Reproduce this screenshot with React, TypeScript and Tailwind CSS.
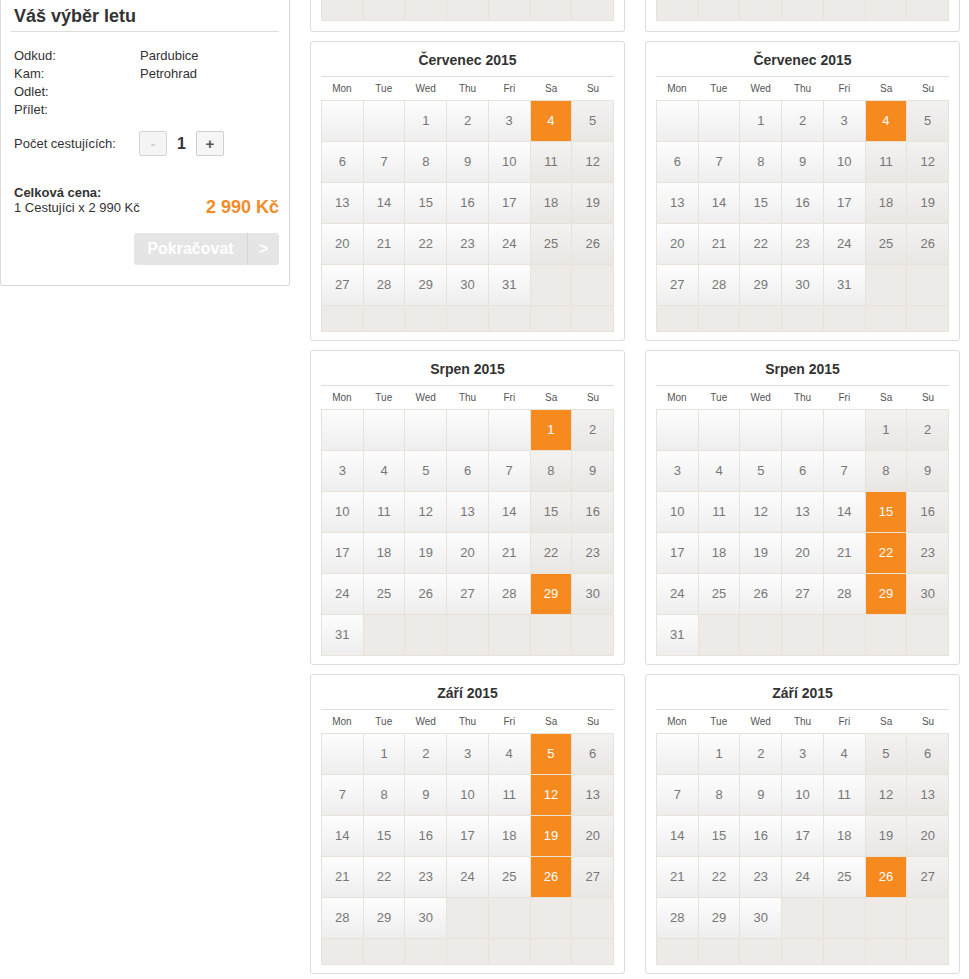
import clsx from 'clsx';

const WEEKDAYS = ['Mon', 'Tue', 'Wed', 'Thu', 'Fri', 'Sa', 'Su'];

type Month = { title: string; offset: number; days: number; marked: number[] };

const LEFT: Month[] = [
  { title: 'Červenec 2015', offset: 2, days: 31, marked: [4] },
  { title: 'Srpen 2015', offset: 5, days: 31, marked: [1, 29] },
  { title: 'Září 2015', offset: 1, days: 30, marked: [5, 12, 19, 26] },
];

const RIGHT: Month[] = [
  { title: 'Červenec 2015', offset: 2, days: 31, marked: [4] },
  { title: 'Srpen 2015', offset: 5, days: 31, marked: [15, 22, 29] },
  { title: 'Září 2015', offset: 1, days: 30, marked: [26] },
];

const FONT = 'font-["Liberation_Sans",Arial,sans-serif]';

function Cell({ day, col, index, month }: { day: number | null; col: number; index: number; month: Month }) {
  const weekend = col >= 5;
  const trailing = day === null && index >= month.offset;
  const marked = day !== null && month.marked.includes(day);
  return (
    <div
      className={clsx(
        'flex items-center justify-center text-[13px]',
        marked
          ? 'bg-[#f68a1e] text-white'
          : trailing
            ? 'bg-[#eeeae8]'
            : weekend
              ? 'bg-linear-to-b from-[#f4f2f1] to-[#e9e6e4] text-[#777]'
              : 'bg-linear-to-b from-[#fdfdfd] to-[#eeeeee] text-[#777]'
      )}
    >
      {day}
    </div>
  );
}

function Calendar({ month }: { month: Month }) {
  const cells: (number | null)[] = [];
  for (let i = 0; i < 42; i++) {
    const d = i - month.offset + 1;
    cells.push(d >= 1 && d <= month.days ? d : null);
  }
  const rows = [0, 1, 2, 3, 4, 5].map((r) => cells.slice(r * 7, r * 7 + 7));

  return (
    <div className="rounded-[3px] border border-[#dcdcdc] bg-white px-[10px] pt-[10px] pb-[8px]">
      <div className="h-[25px] border-b border-[#dddddd] text-center text-[14px] font-bold leading-[17px] text-[#333]">
        {month.title}
      </div>
      <div className="grid h-[23px] grid-cols-7 items-center text-center text-[10px] text-[#555]">
        {WEEKDAYS.map((w) => (
          <div key={w}>{w}</div>
        ))}
      </div>
      <div className="flex flex-col gap-px border border-[#e7e3d9] bg-[#e7e3d9]">
        {rows.map((row, r) => {
          const empty = row.every((c) => c === null);
          return (
            <div key={r} className={clsx('grid grid-cols-7 gap-px', empty ? 'h-[25px]' : 'h-[40px]')}>
              {row.map((day, c) => (
                <Cell key={c} day={day} col={c} index={r * 7 + c} month={month} />
              ))}
            </div>
          );
        })}
      </div>
    </div>
  );
}

function CalendarStub() {
  return (
    <div className="rounded-b-[3px] border border-t-0 border-[#dcdcdc] bg-white px-[10px] pb-[10px]">
      <div className="grid h-[21px] grid-cols-7 gap-px border border-t-0 border-[#e7e3d9] bg-[#e7e3d9]">
        {WEEKDAYS.map((w) => (
          <div key={w} className="bg-[#eeeae8]" />
        ))}
      </div>
    </div>
  );
}

function Summary() {
  return (
    <aside className="h-[286px] w-[290px] shrink-0 rounded-b-[3px] border border-t-0 border-[#d9d9d9] bg-white px-[10px] text-[#333]">
      <div className="border-b border-[#dddddd] px-[3px] pt-[6px] pb-[4px] text-[18px] font-bold leading-[21px]">
        Váš výběr letu
      </div>

      <div className="mt-[15px] px-[3px] text-[13px] leading-[18px]">
        {[
          ['Odkud:', 'Pardubice'],
          ['Kam:', 'Petrohrad'],
          ['Odlet:', ''],
          ['Přílet:', ''],
        ].map(([k, v]) => (
          <div key={k} className="flex">
            <span className="w-[126px]">{k}</span>
            <span>{v}</span>
          </div>
        ))}
      </div>

      <div className="mt-[12px] flex items-center px-[3px] text-[13px]">
        <span className="w-[125px]">Počet cestujících:</span>
        <button className="h-[25px] w-[28px] rounded-[2px] border border-[#d5d5d5] bg-[#f4f4f4] text-[14px] font-bold leading-none text-[#cfcfcf]">
          -
        </button>
        <span className="w-[29px] text-center text-[16px] font-bold">1</span>
        <button className="h-[25px] w-[28px] rounded-[2px] border border-[#cfcfcf] bg-[#f6f6f6] text-[15px] font-bold leading-none text-[#555]">
          +
        </button>
      </div>

      <div className="mt-[29px] pl-[3px] text-[13px] leading-[15px]">
        <div className="font-bold">Celková cena:</div>
        <div className="flex items-center justify-between">
          <span>1 Cestujíci x 2 990 Kč</span>
          <span className="text-[18px] font-bold text-[#f28c28]">2 990 Kč</span>
        </div>
      </div>

      <div className="mt-[18px] flex justify-end">
        <div className="flex h-[32px] w-[145px] rounded-[3px] bg-[#e5e5e5] text-[16px] font-bold text-white">
          <span className="flex w-[114px] items-center justify-center border-r border-[#d5d5d5]">Pokračovat</span>
          <span className="flex flex-1 items-center justify-center">&gt;</span>
        </div>
      </div>
    </aside>
  );
}

export default function App() {
  return (
    <div className={clsx('flex min-h-[979px] w-[969px] items-start bg-white', FONT)}>
      <Summary />
      <div className="ml-[20px] grid w-[650px] grid-cols-2 gap-x-[20px] gap-y-[9px]">
        <CalendarStub />
        <CalendarStub />
        {LEFT.map((m, i) => (
          <>
            <Calendar key={'l' + i} month={m} />
            <Calendar key={'r' + i} month={RIGHT[i]} />
          </>
        ))}
      </div>
    </div>
  );
}
